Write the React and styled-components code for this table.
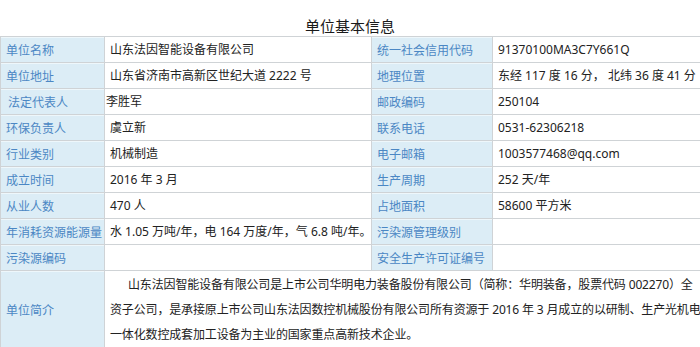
import React from "react";
import styled, { createGlobalStyle } from "styled-components";

const Global = createGlobalStyle`
  html, body { margin: 0; padding: 0; background: #ffffff; }
  body { font-family: "Noto Sans", "Noto Sans CJK SC", sans-serif; overflow: hidden; }
`;

const Page = styled.div`
  width: 700px;
`;

const Title = styled.h1`
  margin: 0;
  padding-top: 16px;
  height: 20px;
  line-height: 20px;
  font-size: 15px;
  font-weight: normal;
  text-align: center;
  color: #1a1a1a;
  font-family: "Noto Sans CJK SC", sans-serif;
`;

const Table = styled.table`
  width: 700px;
  border-collapse: collapse;
  table-layout: fixed;
  font-size: 12px;
`;

const Label = styled.th`
  background: #dcedf6;
  color: #4b87c4;
  font-weight: normal;
  text-align: left;
  border: 1px solid #cfd3d6;
  box-shadow: inset 0 1px 0 #eef7fb;
  padding: 0 0 0 ${(p) => (p.$indent ? "7px" : "5px")};
  height: 25px;
  line-height: 25px;
  white-space: nowrap;
  font-family: "Noto Sans CJK SC", sans-serif;
`;

const Value = styled.td`
  color: #222222;
  border: 1px solid #cfd3d6;
  padding: 0 0 0 ${(p) => (p.$tight ? "1px" : "5px")};
  height: 25px;
  line-height: 25px;
  white-space: nowrap;
  overflow: hidden;
`;

const Summary = styled.td`
  color: #222222;
  border: 1px solid #cfd3d6;
  padding: 1px 0 0 5px;
  line-height: 25px;
  white-space: nowrap;
  overflow: hidden;
`;

const Para = styled.p`
  margin: 0;
  text-indent: 18px;
  letter-spacing: -0.15px;
`;

const rows = [
  ["单位名称", "山东法因智能设备有限公司", "统一社会信用代码", "91370100MA3C7Y661Q"],
  ["单位地址", "山东省济南市高新区世纪大道 2222 号", "地理位置", "东经 117 度 16 分， 北纬 36 度 41 分"],
  ["法定代表人", "李胜军", "邮政编码", "250104", { indent: true, tight: true }],
  ["环保负责人", "虞立新", "联系电话", "0531-62306218"],
  ["行业类别", "机械制造", "电子邮箱", "1003577468@qq.com"],
  ["成立时间", "2016 年 3 月", "生产周期", "252 天/年"],
  ["从业人数", "470 人", "占地面积", "58600 平方米"],
  ["年消耗资源能源量", "水 1.05 万吨/年，电 164 万度/年，气 6.8 吨/年。", "污染源管理级别", ""],
  ["污染源编码", "", "安全生产许可证编号", ""],
];

export default function App() {
  return (
    <Page>
      <Global />
      <Title>单位基本信息</Title>
      <Table>
        <colgroup>
          <col style={{ width: 104 }} />
          <col style={{ width: 267 }} />
          <col style={{ width: 121 }} />
          <col style={{ width: 208 }} />
        </colgroup>
        <tbody>
          {rows.map(([l1, v1, l2, v2, opt = {}]) => (
            <tr key={l1}>
              <Label $indent={opt.indent}>{l1}</Label>
              <Value $tight={opt.tight}>{v1}</Value>
              <Label>{l2}</Label>
              <Value>{v2}</Value>
            </tr>
          ))}
          <tr>
            <Label>单位简介</Label>
            <Summary colSpan={3}>
              <Para>
                山东法因智能设备有限公司是上市公司华明电力装备股份有限公司（简称：华明装备，股票代码 002270）全
                <br />
                资子公司，是承接原上市公司山东法因数控机械股份有限公司所有资源于 2016 年 3 月成立的以研制、生产光机电
                <br />
                一体化数控成套加工设备为主业的国家重点高新技术企业。
              </Para>
            </Summary>
          </tr>
        </tbody>
      </Table>
    </Page>
  );
}
